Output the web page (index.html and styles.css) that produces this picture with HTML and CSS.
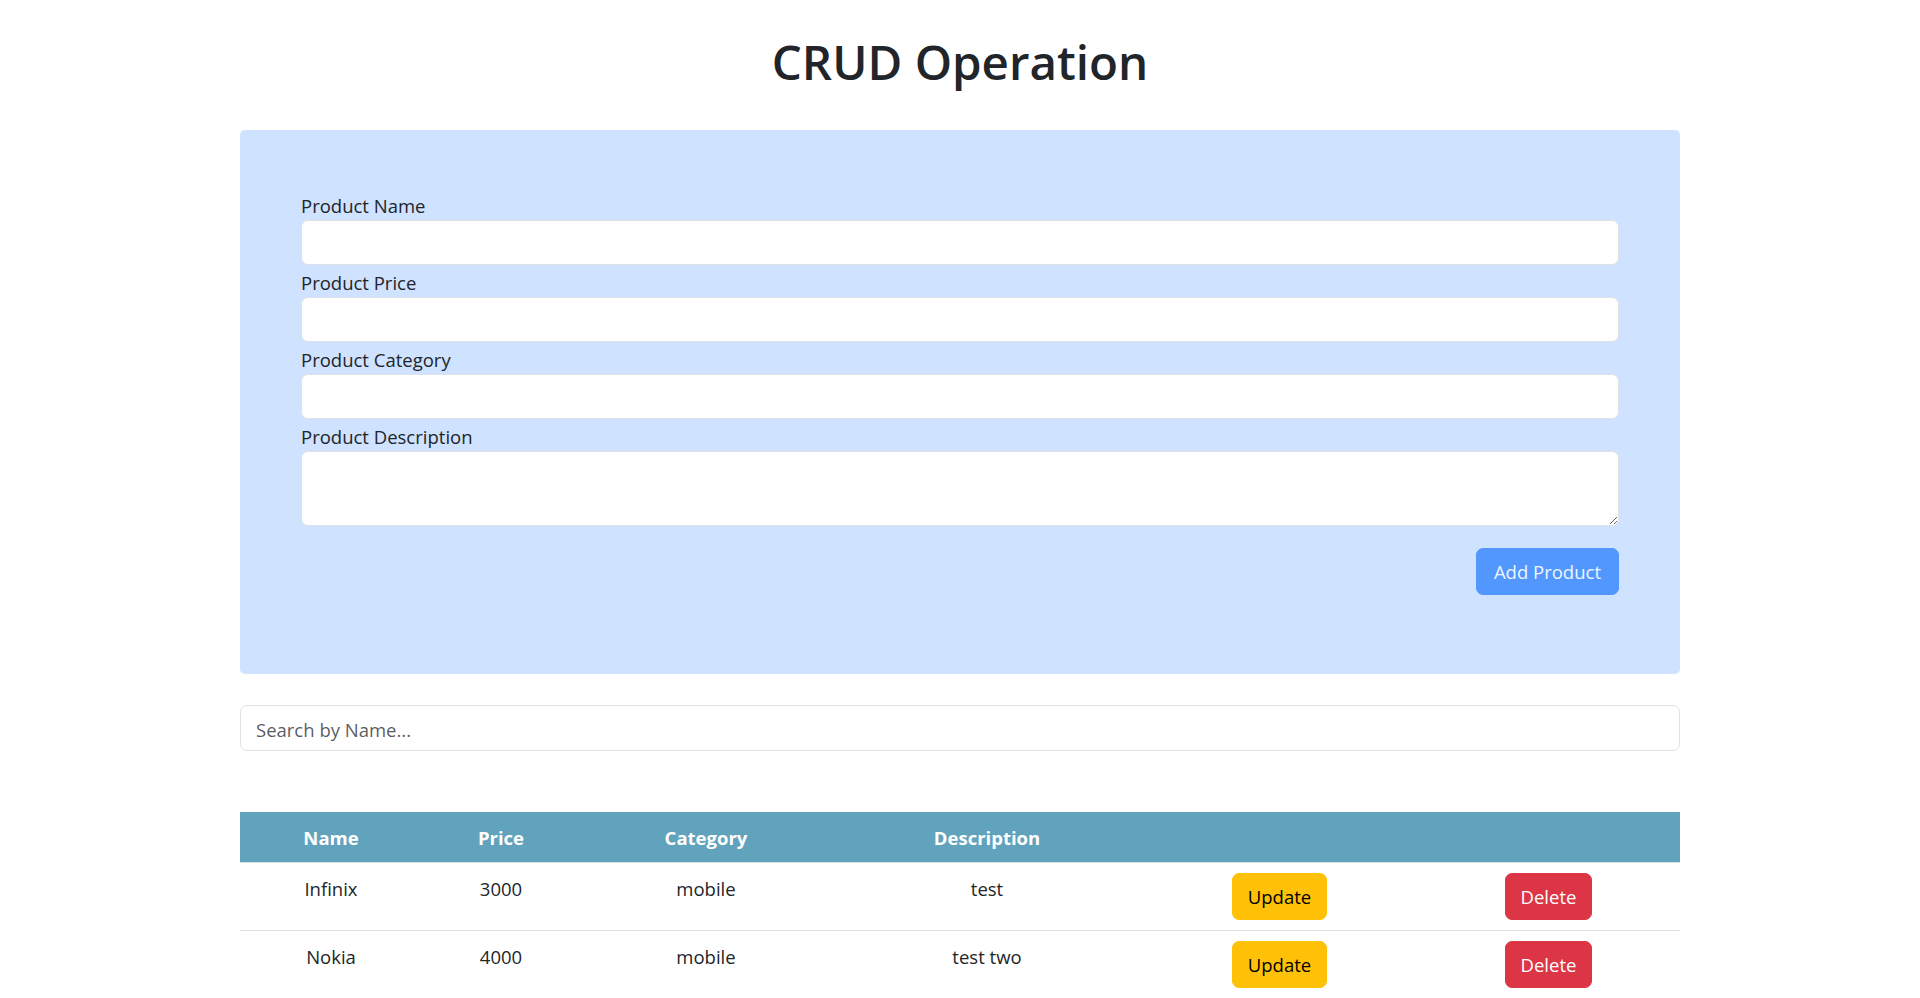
FILE: index.html
```html
<!DOCTYPE html>
<html lang="en">
<head>
<meta charset="utf-8">
<title>CRUD Operation</title>
<link rel="stylesheet" href="styles.css">
</head>
<body>
<main class="page">
  <h1 class="title">CRUD Operation</h1>

  <section class="card">
    <form class="product-form">
      <div class="field">
        <label class="field-label" for="pname">Product Name</label>
        <input class="field-input" id="pname" type="text">
      </div>
      <div class="field">
        <label class="field-label" for="pprice">Product Price</label>
        <input class="field-input" id="pprice" type="text">
      </div>
      <div class="field">
        <label class="field-label" for="pcat">Product Category</label>
        <input class="field-input" id="pcat" type="text">
      </div>
      <div class="field field-last">
        <label class="field-label" for="pdesc">Product Description</label>
        <textarea class="field-input field-area" id="pdesc"></textarea>
      </div>
      <div class="form-actions">
        <button type="button" class="btn btn-add">Add Product</button>
      </div>
    </form>
  </section>

  <input class="search" type="text" placeholder="Search by Name...">

  <table class="products">
    <colgroup>
      <col class="col-name">
      <col class="col-price">
      <col class="col-cat">
      <col class="col-desc">
      <col class="col-upd">
      <col class="col-del">
    </colgroup>
    <thead>
      <tr>
        <th>Name</th>
        <th>Price</th>
        <th>Category</th>
        <th>Description</th>
        <th></th>
        <th></th>
      </tr>
    </thead>
    <tbody>
      <tr>
        <td>Infinix</td>
        <td>3000</td>
        <td>mobile</td>
        <td>test</td>
        <td class="cell-action"><button type="button" class="btn btn-update">Update</button></td>
        <td class="cell-action"><button type="button" class="btn btn-delete">Delete</button></td>
      </tr>
      <tr>
        <td>Nokia</td>
        <td>4000</td>
        <td>mobile</td>
        <td>test two</td>
        <td class="cell-action"><button type="button" class="btn btn-update">Update</button></td>
        <td class="cell-action"><button type="button" class="btn btn-delete">Delete</button></td>
      </tr>
    </tbody>
  </table>
</main>
</body>
</html>
```

FILE: styles.css
```css
* {
  box-sizing: border-box;
}

html, body {
  margin: 0;
  padding: 0;
  background: #ffffff;
}

body {
  font-family: "Open Sans", "Noto Sans", "Liberation Sans", sans-serif;
  font-size: 18.5px;
  color: #212529;
}

.page {
  width: 1440px;
  margin: 0 auto;
}

.title {
  margin: 32px 0 38px;
  font-size: 47.5px;
  font-weight: 600;
  line-height: 60px;
  text-align: center;
  color: #212529;
}

.card {
  background: #cfe2ff;
  border-radius: 5px;
  padding: 60px 61px 79px 61px;
}

.product-form {
  display: flex;
  flex-direction: column;
}

.field {
  display: flex;
  flex-direction: column;
  margin-bottom: 2px;
}

.field-last {
  margin-bottom: 0;
}

.field-label {
  display: block;
  line-height: 28px;
  padding-top: 2px;
  margin-bottom: 0;
  color: #212529;
}

.field-input {
  display: block;
  width: 100%;
  height: 45px;
  padding: 0 14px;
  border: 1px solid #dee2e6;
  border-radius: 7px;
  background: #ffffff;
  font-family: inherit;
  font-size: 18.5px;
  color: #212529;
  outline: none;
}

.field-area {
  height: 75px;
  padding: 7px 14px;
  resize: vertical;
}

.form-actions {
  display: flex;
  justify-content: flex-end;
  margin-top: 22px;
}

.btn {
  display: inline-block;
  height: 47px;
  padding: 0 15px;
  border: 1px solid transparent;
  border-radius: 7px;
  font-family: inherit;
  font-size: 18.5px;
  line-height: 45px;
  cursor: pointer;
}

.btn-add {
  padding: 0 17px;
  background: #5197fe;
  border-color: #5197fe;
  color: #eef5ff;
}

.btn-update {
  background: #ffc107;
  border-color: #ffc107;
  color: #000000;
}

.btn-delete {
  background: #dc3545;
  border-color: #dc3545;
  color: #ffffff;
}

.search {
  display: block;
  width: 100%;
  height: 46px;
  margin-top: 31px;
  padding: 2px 15px 0;
  border: 1px solid #dee2e6;
  border-radius: 7px;
  font-family: inherit;
  font-size: 18.5px;
  color: #212529;
  outline: none;
}

.search::placeholder {
  color: rgba(33, 37, 41, 0.75);
}

.products {
  width: 100%;
  margin-top: 61px;
  border-collapse: collapse;
  table-layout: fixed;
}

.col-name { width: 182px; }
.col-price { width: 158px; }
.col-cat { width: 252px; }
.col-desc { width: 310px; }
.col-upd { width: 275px; }
.col-del { width: 263px; }

.products th {
  height: 50px;
  padding: 2px 10px 0;
  background: #61a3bc;
  color: #ffffff;
  font-weight: 700;
  text-align: center;
  vertical-align: middle;
  border-bottom: 1px solid #dee2e6;
}

.products td {
  padding: 12px 10px 10px;
  text-align: center;
  vertical-align: top;
  line-height: 28px;
  color: #212529;
  border-bottom: 1px solid #dee2e6;
}

.products td.cell-action {
  padding-top: 10px;
}
```
